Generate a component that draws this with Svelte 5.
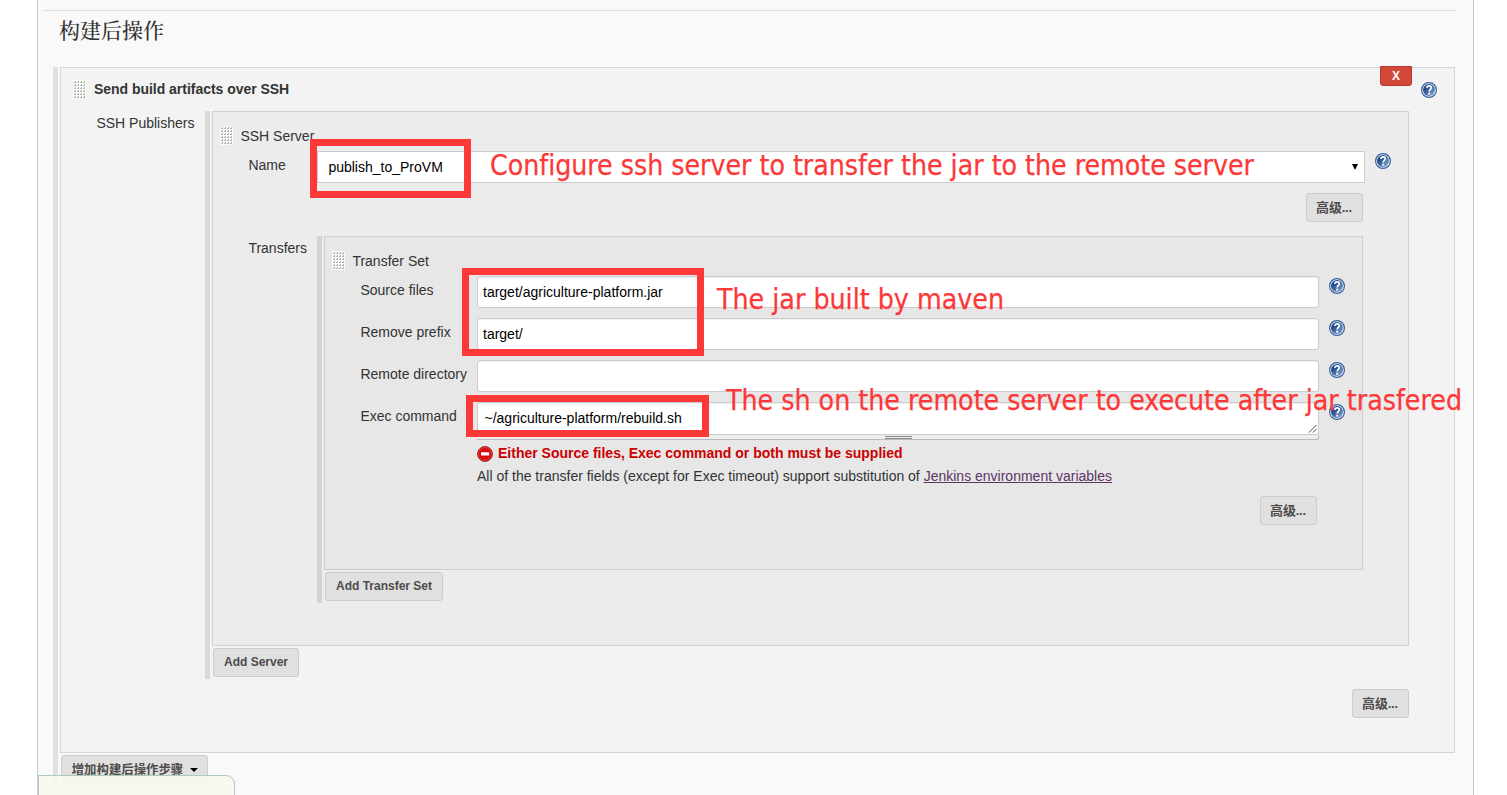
<script>
  const fields = [
    { label: 'Source files', value: 'target/agriculture-platform.jar' },
    { label: 'Remove prefix', value: 'target/' },
    { label: 'Remote directory', value: '' }
  ];
</script>

{#snippet handle()}
  <svg class="handle" width="13" height="19" viewBox="0 0 13 19" shape-rendering="crispEdges">
    <rect width="13" height="19" fill="#fafafa" />
    {#each [1, 4, 7, 10] as x}
      {#each [1, 4, 7, 10, 13, 16] as y}
        <path d={`M${x} ${y + 1}h1v-1h1v2h-2z`} fill="#b4b4b0" />
      {/each}
    {/each}
  </svg>
{/snippet}

{#snippet help()}
  <svg class="help" width="16" height="16" viewBox="0 0 16 16">
    <defs>
      <linearGradient id="blue" x1="0" y1="0" x2="1" y2="1">
        <stop offset="0.3" stop-color="#234b8b" />
        <stop offset="1" stop-color="#8fb2dc" />
      </linearGradient>
    </defs>
    <circle cx="8" cy="8" r="7.4" fill="#f4f8fd" stroke="#35609b" stroke-width="1.2" />
    <circle cx="8" cy="8" r="6" fill="url(#blue)" />
    <path d="M5.9 5.9C6 4.5 6.9 3.9 8.1 3.9c1.3 0 2.2.7 2.2 1.9 0 1.5-2.1 1.7-2.1 3.8" fill="none" stroke="#fff" stroke-width="1.7" />
    <path d="M7.2 10.7h2v1.9h-2z" fill="#fff" />
  </svg>
{/snippet}

<div class="page">
  <div class="rule"></div>
  <h2>构建后操作</h2>
  <div class="list outer">
    <section class="chunk one">
      <header>{@render handle()}<b>Send build artifacts over SSH</b></header>
      <div class="row publishers">
        <div class="label">SSH Publishers</div>
        <div class="list middle">
          <section class="chunk two">
            <header>{@render handle()}<span>SSH Server</span></header>
            <div class="row name">
              <div class="label">Name</div>
              <div class="select"><span>publish_to_ProVM</span><i></i></div>
              {@render help()}
            </div>
            <div class="actions"><button>高级...</button></div>
            <div class="row transfers">
              <div class="label">Transfers</div>
              <div class="list inner">
                <section class="chunk three">
                  <header>{@render handle()}<span>Transfer Set</span></header>
                  {#each fields as f}
                    <div class="row field">
                      <div class="label">{f.label}</div>
                      <div class="input">{f.value}</div>
                      {@render help()}
                    </div>
                  {/each}
                  <div class="row field">
                    <div class="label">Exec command</div>
                    <div class="area">
                      <div class="input text">~/agriculture-platform/rebuild.sh
                        <svg width="10" height="10" viewBox="0 0 10 10"><path d="M1 8.5L8.5 1M5 8.5L8.5 5" stroke="#444" fill="none" /></svg>
                      </div>
                      <div class="grip"><i></i></div>
                    </div>
                    {@render help()}
                  </div>
                  <div class="error">
                    <svg width="16" height="16" viewBox="0 0 16 16">
                      <circle cx="8" cy="8" r="7.4" fill="#d60d0d" stroke="#9c1c1c" />
                      <circle cx="8" cy="8" r="6.5" fill="none" stroke="#e84a4a" stroke-width=".7" />
                      <rect x="4" y="6.2" width="8.2" height="3.2" rx=".5" fill="#fff" />
                    </svg>
                    <b>Either Source files, Exec command or both must be supplied</b>
                  </div>
                  <p>All of the transfer fields (except for Exec timeout) support substitution of <a href="#env">Jenkins environment variables</a></p>
                  <div class="actions"><button>高级...</button></div>
                </section>
                <button class="add">Add Transfer Set</button>
              </div>
            </div>
          </section>
          <button class="add">Add Server</button>
        </div>
      </div>
      <div class="actions"><button>高级...</button></div>
      <button class="delete">X</button>
      <div class="tophelp">{@render help()}</div>
    </section>
    <button class="add step">增加构建后操作步骤<i></i></button>
  </div>
  <div class="status"></div>
</div>

<svg class="notes" width="1507" height="795" viewBox="0 0 1507 795">
  <g fill="none" stroke="#fc3838" stroke-width="7">
    <rect x="313.5" y="142.5" width="154" height="52" />
    <rect x="465.5" y="271.5" width="235" height="81" />
    <rect x="469.5" y="398.5" width="236" height="35" />
  </g>
  <g class="remarks">
    <text x="490" y="175" textLength="764" lengthAdjust="spacingAndGlyphs">Configure ssh server to transfer the jar to the remote server</text>
    <text x="717" y="309" textLength="287" lengthAdjust="spacingAndGlyphs">The jar built by maven</text>
    <text x="726" y="410" textLength="736" lengthAdjust="spacingAndGlyphs">The sh on the remote server to execute after jar trasfered</text>
  </g>
</svg>

<style>
  :global(body) { background: #fff; overflow: hidden; }
  * { box-sizing: border-box; }
  .page {
    position: relative; margin: 0 33px 0 37px; height: 795px; overflow: hidden;
    background: #f9f9f9; border: solid #ccc; border-width: 0 1px;
    padding: 10px 16px 0 5px;
    font: 14px/20px "Liberation Sans", Arial, "Noto Sans CJK SC", sans-serif; color: #333;
  }
  .rule { height: 1px; background: #ddd; }
  h2 {
    margin: 2px 0 0 16px; height: 54px; font: 500 21px/32px "Noto Serif CJK SC", "Noto Sans CJK SC", serif;
    color: #333;
  }
  .list { display: flex; flex-direction: column; align-items: flex-start; border-left: 5px solid #dadada; padding-left: 2px; }
  .outer { margin: 0 2px 0 10px; border-color: #e0e0e0; height: 719px; }
  .middle { width: 1204px; height: 568px; border-color: #d9d9d9; }
  .inner { width: 1046px; height: 367px; border-color: #d3d3d3; }
  .chunk { width: 100%; flex: none; border: 1px solid #d5d5d5; }
  .one { position: relative; height: 686px; background: #f3f3f3; width: 1395px; }
  .two { height: 535px; background: #ececec; border-color: #d2d2d2; width: 1197px; }
  .three { height: 334px; background: #e7e7e7; border-color: #cdcdcd; width: 1039px; }
  header { display: flex; align-items: flex-start; gap: 8px; padding-left: 12px; height: 43px; padding-top: 12px; }
  header .handle { flex: none; }
  header b { font-size: 14px; line-height: 19px; letter-spacing: -.03px; }
  .two > header, .three > header { height: 39px; padding: 14px 0 0 7px; gap: 7.4px; }
  .row { display: flex; align-items: flex-start; }
  .label { flex: none; line-height: 28px; white-space: nowrap; }
  .publishers > .label { width: 144px; padding-left: 35.4px; line-height: 24px; }
  .name > .label { width: 104px; padding-left: 35.4px; }
  .select {
    width: 1048px; height: 32px; display: flex; align-items: center; justify-content: space-between;
    background: #fff; border: 1px solid #ccc; padding: 0 6px 0 10.4px; color: #000;
  }
  .select i { border: 3px solid transparent; border-top: 6px solid #000; border-bottom: 0; }
  .help { flex: none; display: block; margin: 2px 0 0 10px; }
  .two > .actions { display: flex; justify-content: flex-end; padding: 10px 45px 0 0; height: 53px; }
  .transfers > .label { width: 104px; padding-left: 35.4px; line-height: 24px; }
  .field { height: 42px; }
  .field > .label { width: 152px; padding-left: 35.4px; }
  .input {
    width: 842px; height: 32px; line-height: 31px; background: #fff; border: 1px solid #ccc; border-radius: 3px;
    padding-left: 5px; color: #000; box-shadow: inset 0 1px 1px #0001;
  }
  .text { height: 33px; padding-left: 6.5px; display: flex; justify-content: space-between; }
  .text svg { align-self: flex-end; }
  .grip { height: 5px; background: #eee; border: solid #bbb; border-width: 0 1px 1px 0; display: flex; justify-content: center; }
  .grip i { width: 27px; height: 3px; margin: 1px 0 0 1px; border: solid #888; border-width: 1px 0; }
  .error { display: flex; gap: 5px; padding-left: 152px; height: 18px; align-items: center; color: #c00; }
  .error svg { position: relative; top: 1px; }
  p { margin: 4px 0 0 152px; }
  a { color: #5c3566; }
  .three > .actions { display: flex; justify-content: flex-end; padding: 10px 45px 0 0; }
  .one > .actions { display: flex; justify-content: flex-end; padding: 10px 45px 0 0; }
  button {
    height: 29px; padding: 0 10px; background: #e0e0e0; border: 1px solid #ccc; border-radius: 3px; color: #4f4b4b;
    font: bold 12px/27px "Liberation Sans", Arial, "Noto Sans CJK SC", sans-serif; white-space: nowrap;
  }
  .actions button { width: 57px; font-size: 13px; letter-spacing: -.2px; padding: 0 1px 0 0; }
  .add { margin: 2px 0 0 1px; flex: none; }
  .middle > .add { width: 86px; padding: 0; }
  .inner > .add { width: 118px; padding: 0; }
  .outer > .add { width: 147px; padding: 2px 0 0 1px; font-size: 12.4px; display: flex; align-items: center; justify-content: center; gap: 7px; }
  .step i { border: 4px solid transparent; border-top-color: #000; border-bottom: 0; margin-top: -2px; }
  .delete {
    position: absolute; top: -2px; right: 42px; width: 32px; height: 20px; padding: 0; line-height: 17px;
    color: #fff; background: #d24939; border-color: #b93a2c; border-radius: 0 0 3px 3px;
  }
  .tophelp { position: absolute; right: 17px; top: 12px; }
  .status {
    position: absolute; left: 0; top: 775px; width: 197px; height: 30px; background: #f7f9f0e6;
    border: 1px solid #a9ccb5; border-radius: 0 9px 0 0;
  }
  .notes { position: absolute; left: 0; top: 0; pointer-events: none; }
  .remarks {
    fill: #fc3838; stroke: #fc3838; stroke-width: .25px; font: 28px "DejaVu Sans Condensed", "DejaVu Sans", sans-serif;
    font-stretch: condensed; font-variant-ligatures: none;
  }
</style>
